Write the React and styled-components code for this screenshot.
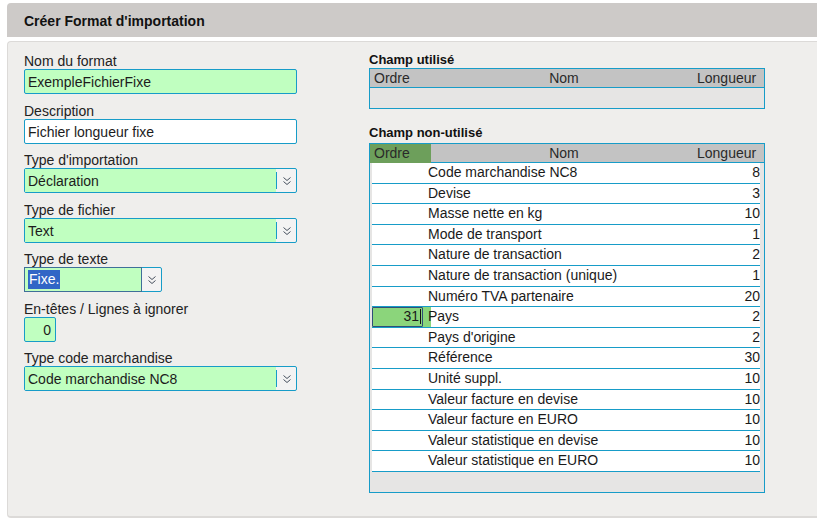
import React from "react";
import styled, { createGlobalStyle } from "styled-components";

const GlobalStyle = createGlobalStyle`
  html, body { margin: 0; padding: 0; background: #ffffff; overflow: hidden; }
  body {
    font-family: "Liberation Sans", Arial, sans-serif;
    font-size: 14px;
    color: #1c1c1c;
  }
  * { box-sizing: border-box; }
`;

const CYAN = "#179cc8";
const GREEN = "#c0ffc0";

const Page = styled.div`
  padding: 3px 0 0 7px;
  width: 840px;
`;

const TitleBar = styled.div`
  height: 34px;
  background: #cdcac8;
  border-radius: 4px 0 0 0;
  padding: 1px 0 0 17px;
  display: flex;
  align-items: center;
  font-weight: bold;
  font-size: 14px;
  color: #111;
`;

const Panel = styled.div`
  margin-top: 4px;
  height: 477px;
  background: #efeeec;
  border: 1px solid #dcdad8;
  border-bottom-width: 2px;
  border-right: none;
  border-radius: 4px 0 0 4px;
  padding: 11px 0 0 16px;
  display: flex;
  gap: 72px;
  align-items: flex-start;
`;

const LeftColumn = styled.div`
  width: 273px;
  display: flex;
  flex-direction: column;
  gap: 8.5px;
`;

const Field = styled.div`
  display: flex;
  flex-direction: column;
`;

const Label = styled.div`
  height: 16px;
  line-height: 16px;
  color: #222;
`;

const TextBox = styled.div`
  height: 25px;
  width: ${(p) => p.$w || "273px"};
  border: 1px solid ${CYAN};
  border-radius: 2px;
  background: ${(p) => (p.$green ? GREEN : "#ffffff")};
  padding: 0 ${(p) => (p.$right ? "4px" : "3px")};
  line-height: 24px;
  text-align: ${(p) => (p.$right ? "right" : "left")};
  white-space: nowrap;
`;

const SelectBox = styled.div`
  height: 25px;
  width: ${(p) => p.$w || "273px"};
  border: 1px solid ${CYAN};
  border-radius: 2px;
  display: flex;
  background: #f3f3f3;
`;

const SelectValue = styled.div`
  flex: 1;
  background: ${GREEN};
  padding: 0 3px;
  white-space: nowrap;
  border: ${(p) => (p.$focused ? "1px solid #3f6f98" : "none")};
  margin: ${(p) => (p.$focused ? "-1px 0 -1px -1px" : "0")};
  line-height: ${(p) => (p.$focused ? "23px" : "24px")};
`;

const Selected = styled.span`
  background: #3166c6;
  color: #ffffff;
  padding: 1px 1px 2px 1px;
`;

const Separator = styled.div`
  width: 1px;
  height: 17px;
  align-self: center;
  background: ${CYAN};
`;

const ArrowButton = styled.div`
  width: 19px;
  display: flex;
  align-items: center;
  justify-content: center;
  padding-top: 1px;
`;

const RightColumn = styled.div`
  width: 396px;
  display: flex;
  flex-direction: column;
`;

const SectionTitle = styled.div`
  font-weight: bold;
  font-size: 13px;
  line-height: 14px;
  color: #111;
  margin-top: ${(p) => p.$mt || "0px"};
  margin-bottom: ${(p) => p.$mb || "1px"};
`;

const Table = styled.div`
  border: 1px solid ${CYAN};
  background: #e6e5e4;
`;

const HeaderRow = styled.div`
  display: grid;
  grid-template-columns: 61px 1fr 67px;
  height: 19px;
  background: #c3c3c3;
  border-bottom: 1px solid ${CYAN};
  line-height: 19px;
  color: #2a2a2a;
`;

const HeaderCell = styled.div`
  padding: 0 ${(p) => (p.$align === "right" ? "10px" : "0")} 0 ${(p) => (p.$align === "left" ? "4px" : "0")};
  text-align: ${(p) => p.$align};
  background: ${(p) => (p.$active ? "#6d9f5b" : "transparent")};
`;

const Body = styled.div`
  min-height: ${(p) => p.$min || "20px"};
  padding-bottom: ${(p) => p.$pb || "0px"};
`;

const Row = styled.div`
  display: grid;
  grid-template-columns: 59px 1fr 50px;
  height: 20.6px;
  margin: 0 4px 0 2px;
  background: #ffffff;
  border-bottom: 1px solid ${CYAN};
  line-height: 19.6px;
  color: #1a1a1a;
`;

const OrderCell = styled.div`
  background: ${(p) => (p.$active ? "#8bd57b" : "transparent")};
  display: flex;
`;

const OrderInput = styled.div`
  width: 51px;
  height: 100%;
  border: 1px solid #2f4f78;
  border-radius: 1px;
  display: flex;
  align-items: center;
  justify-content: flex-end;
  padding-right: 1px;
  line-height: 17px;
`;

const Caret = styled.span`
  width: 1px;
  height: 15px;
  background: #111;
  margin-left: 1px;
`;

const NameCell = styled.div`
  margin-left: -3px;
  white-space: nowrap;
`;

const LengthCell = styled.div`
  text-align: right;
`;

const DoubleChevron = () => (
  <svg width="10" height="10" viewBox="0 0 10 10">
    <path d="M1.5 1.5 L5 4.5 L8.5 1.5" fill="none" stroke="#46505e" strokeWidth="1" />
    <path d="M1.5 5.5 L5 8.5 L8.5 5.5" fill="none" stroke="#46505e" strokeWidth="1" />
  </svg>
);

const Select = ({ value, w, focused }) => (
  <SelectBox $w={w}>
    <SelectValue $focused={focused}>
      {focused ? <Selected>{value}</Selected> : value}
    </SelectValue>
    {!focused && <Separator />}
    <ArrowButton>
      <DoubleChevron />
    </ArrowButton>
  </SelectBox>
);

const rows = [
  ["Code marchandise NC8", 8],
  ["Devise", 3],
  ["Masse nette en kg", 10],
  ["Mode de transport", 1],
  ["Nature de transaction", 2],
  ["Nature de transaction (unique)", 1],
  ["Numéro TVA partenaire", 20],
  ["Pays", 2, "31"],
  ["Pays d'origine", 2],
  ["Référence", 30],
  ["Unité suppl.", 10],
  ["Valeur facture en devise", 10],
  ["Valeur facture en EURO", 10],
  ["Valeur statistique en devise", 10],
  ["Valeur statistique en EURO", 10],
];

const TableHeader = ({ active }) => (
  <HeaderRow>
    <HeaderCell $align="left" $active={active}>Ordre</HeaderCell>
    <HeaderCell $align="center">Nom</HeaderCell>
    <HeaderCell $align="right">Longueur</HeaderCell>
  </HeaderRow>
);

export default function App() {
  return (
    <>
      <GlobalStyle />
      <Page>
        <TitleBar>Créer Format d'importation</TitleBar>
        <Panel>
          <LeftColumn>
            <Field>
              <Label>Nom du format</Label>
              <TextBox $green>ExempleFichierFixe</TextBox>
            </Field>
            <Field>
              <Label>Description</Label>
              <TextBox>Fichier longueur fixe</TextBox>
            </Field>
            <Field>
              <Label>Type d'importation</Label>
              <Select value="Déclaration" />
            </Field>
            <Field>
              <Label>Type de fichier</Label>
              <Select value="Text" />
            </Field>
            <Field>
              <Label>Type de texte</Label>
              <Select value="Fixe." w="138px" focused />
            </Field>
            <Field>
              <Label>En-têtes / Lignes à ignorer</Label>
              <TextBox $green $right $w="32px">0</TextBox>
            </Field>
            <Field>
              <Label>Type code marchandise</Label>
              <Select value="Code marchandise NC8" />
            </Field>
          </LeftColumn>
          <RightColumn>
            <SectionTitle $mb="1px">Champ utilisé</SectionTitle>
            <Table>
              <TableHeader />
              <Body $min="20px" />
            </Table>
            <SectionTitle $mt="17px" $mb="3px">Champ non-utilisé</SectionTitle>
            <Table>
              <TableHeader active />
              <Body $pb="20px">
                {rows.map(([name, len, order]) => (
                  <Row key={name}>
                    <OrderCell $active={!!order}>
                      {order && (
                        <OrderInput>
                          {order}
                          <Caret />
                        </OrderInput>
                      )}
                    </OrderCell>
                    <NameCell>{name}</NameCell>
                    <LengthCell>{len}</LengthCell>
                  </Row>
                ))}
              </Body>
            </Table>
          </RightColumn>
        </Panel>
      </Page>
    </>
  );
}
